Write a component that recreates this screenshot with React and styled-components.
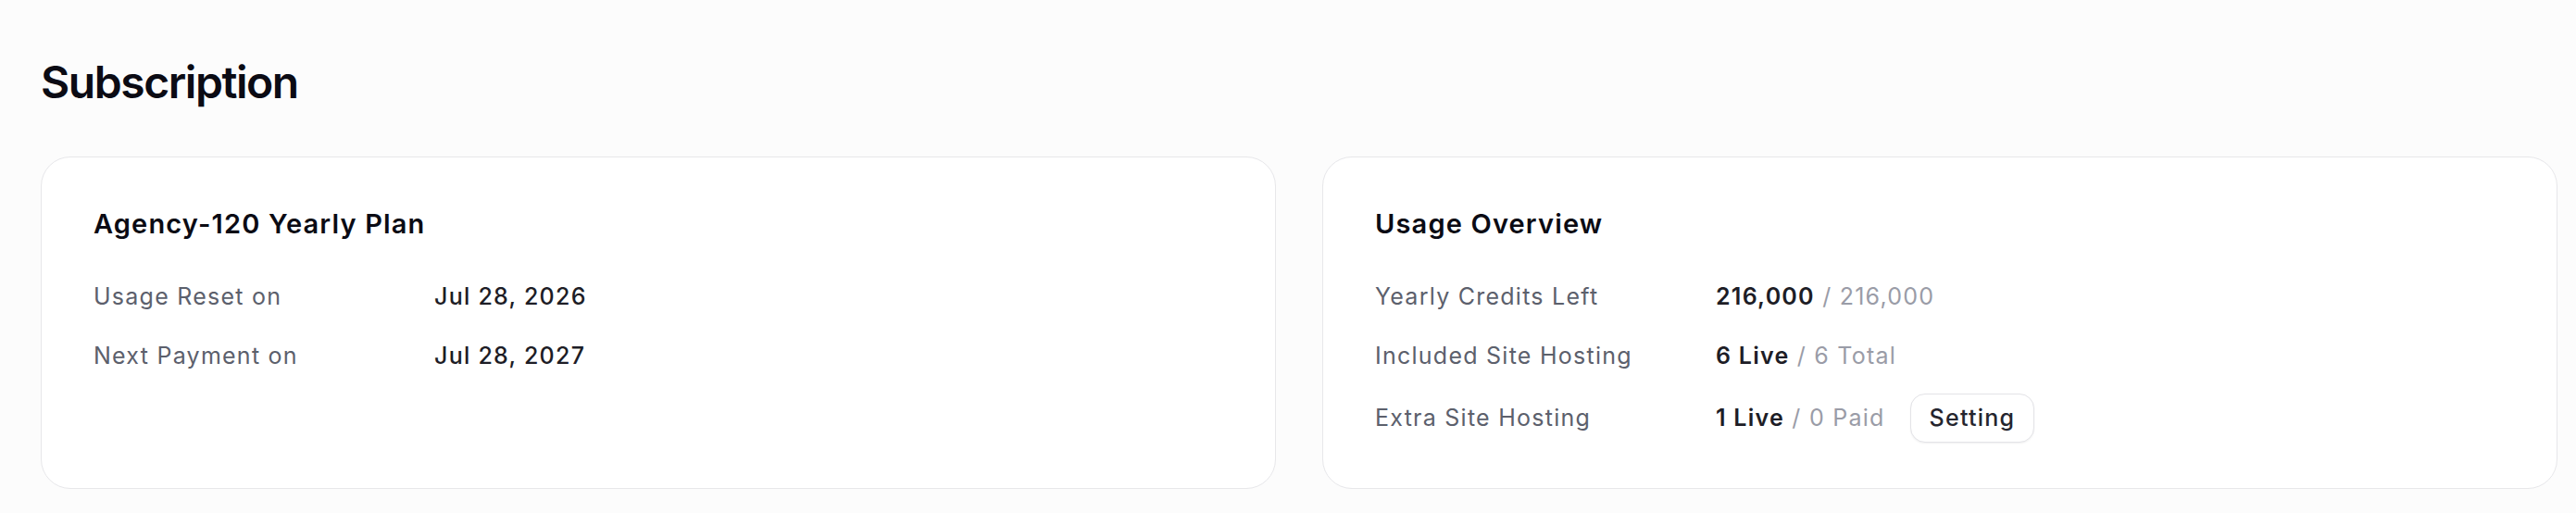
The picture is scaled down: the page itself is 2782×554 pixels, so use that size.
import React from 'react'
import styled, { createGlobalStyle } from 'styled-components'

const GlobalStyle = createGlobalStyle`
  html, body {
    margin: 0;
    padding: 0;
    background: #fcfcfc;
    font-family: Inter, "Noto Sans", "Liberation Sans", sans-serif;
    -webkit-font-smoothing: antialiased;
  }
`

const plan = {
  name: 'Agency-120 Yearly Plan',
  rows: [
    { label: 'Usage Reset on', value: 'Jul 28, 2026' },
    { label: 'Next Payment on', value: 'Jul 28, 2027' },
  ],
}

const usage = [
  { label: 'Yearly Credits Left', main: '216,000', rest: '216,000' },
  { label: 'Included Site Hosting', main: '6 Live', rest: '6 Total' },
  { label: 'Extra Site Hosting', main: '1 Live', rest: '0 Paid', action: 'Setting' },
]

function App() {
  return (
    <Page>
      <GlobalStyle />
      <Heading>Subscription</Heading>
      <Cards>
        <Card>
          <CardTitle>{plan.name}</CardTitle>
          <Rows>
            {plan.rows.map(row => (
              <Row key={row.label}>
                <Label>{row.label}</Label>
                <Value>{row.value}</Value>
              </Row>
            ))}
          </Rows>
        </Card>
        <Card>
          <CardTitle>Usage Overview</CardTitle>
          <Rows>
            {usage.map(row => (
              <Row key={row.label}>
                <Label>{row.label}</Label>
                <Value>
                  <Strong>{row.main}</Strong>
                  <Muted> / {row.rest}</Muted>
                  {row.action && <SmallButton>{row.action}</SmallButton>}
                </Value>
              </Row>
            ))}
          </Rows>
        </Card>
      </Cards>
    </Page>
  )
}

const Page = styled.div`
  padding: 60px 20px 26px 44px;
`

const Heading = styled.h1`
  margin: 0 0 51px;
  font-size: 48px;
  line-height: 1.2;
  font-weight: 600;
  letter-spacing: -0.03em;
  color: #0b0b14;
`

const Cards = styled.div`
  display: grid;
  grid-template-columns: 1fr 1fr;
  gap: 50px;
`

const Card = styled.div`
  background: #fff;
  border: 1px solid #e7e7ea;
  border-radius: 32px;
  padding: 54px 56px 46px;
  min-height: 359px;
  box-sizing: border-box;
`

const CardTitle = styled.h2`
  margin: 0 0 40px;
  font-size: 29px;
  line-height: 36px;
  font-weight: 600;
  letter-spacing: 0.04em;
  color: #0b0b14;
`

const Rows = styled.div`
  display: flex;
  flex-direction: column;
  gap: 24px;
`

const Row = styled.div`
  display: grid;
  grid-template-columns: 368px 1fr;
  align-items: center;
  min-height: 40px;
  font-size: 25px;
  line-height: 40px;
  letter-spacing: 0.05em;
`

const Label = styled.span`
  color: #5c606c;
`

const Value = styled.span`
  display: flex;
  align-items: center;
  color: #1d1d26;
  font-weight: 450;
`

const Strong = styled.span`
  font-weight: 600;
  color: #1d1d26;
`

const Muted = styled.span`
  font-weight: 400;
  color: #9a9ca7;
  white-space: pre;
`

const SmallButton = styled.button`
  margin: -3px 0 -3px 27px;
  height: 53px;
  padding: 0 20px;
  border: 1px solid #e3e3e7;
  border-radius: 16px;
  background: #fff;
  box-shadow: 0 1px 2px rgba(0, 0, 0, 0.06);
  font-family: inherit;
  font-size: 25px;
  font-weight: 450;
  letter-spacing: 0.05em;
  color: #25252e;
  cursor: pointer;
`

export default App
